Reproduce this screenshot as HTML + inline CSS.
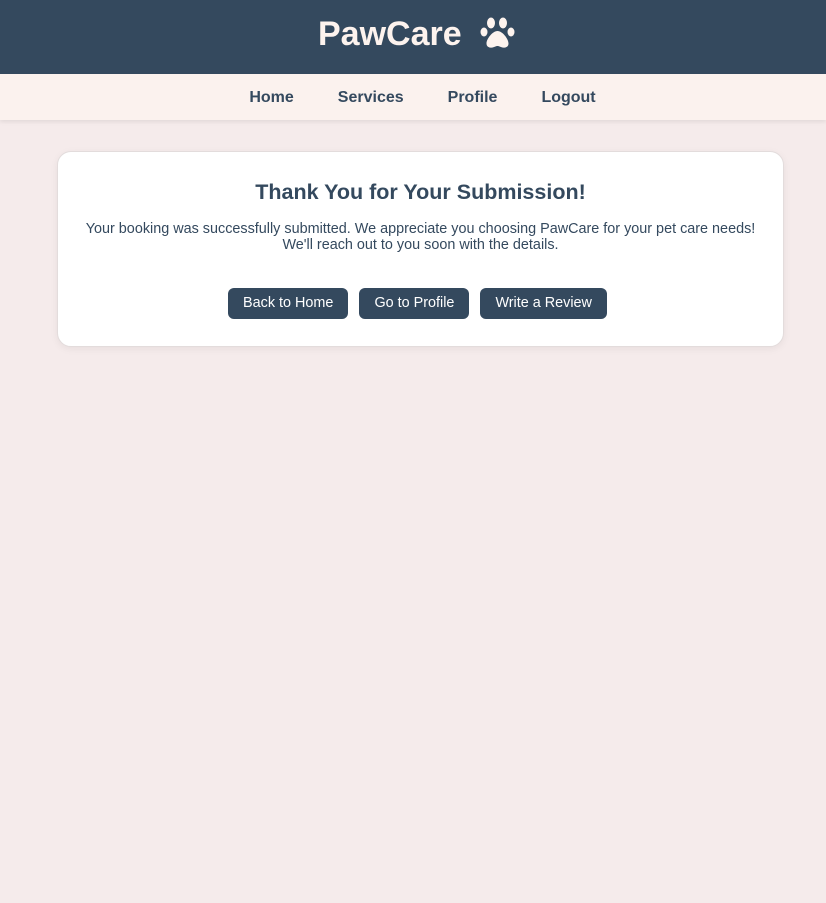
<!DOCTYPE html>
<html><head><meta charset="utf-8"><style>
*{margin:0;padding:0;box-sizing:border-box}
body{width:826px;height:903px;background:#f5ebeb;font-family:"Liberation Sans",Arial,sans-serif;overflow:hidden}
header{height:74px;background:#34495e;position:relative}
header h1{position:absolute;left:318px;top:15px;color:#fdf3ee;font-family:"Liberation Sans",sans-serif;font-size:34px;font-weight:bold;font-style:normal}
header svg{position:absolute;left:480px;top:15px}
nav{height:46px;background:#fbf2ee;display:flex;justify-content:center;align-items:center;box-shadow:0 2px 4px rgba(0,0,0,.08);padding-left:19px;padding-top:1px}
nav a{color:#34495e;font-weight:bold;font-size:16px;text-decoration:none;margin:0 22px}
.card{position:absolute;left:57px;top:151px;width:727px;height:196px;background:#fff;border:1px solid #e3dcdc;border-radius:14px;box-shadow:0 2px 8px rgba(0,0,0,.06);text-align:center}
h2{color:#34495e;font-size:21.5px;margin-top:28px}
p{color:#34495e;font-size:14.4px;line-height:16px;margin-top:16px}
.btns{margin-top:35px;display:flex;justify-content:center;gap:11px;margin-right:6px}
.btns span{background:#34495e;color:#fff;font-size:14.4px;height:31px;line-height:31px;padding:0 15px;border-radius:6px}
</style></head><body>
<header><h1>PawCare</h1>
<svg width="36" height="36" viewBox="0 0 36 34"><g fill="#fdf3ee"><ellipse cx="11" cy="7" rx="4" ry="5.5"/><ellipse cx="23" cy="7" rx="4" ry="5.5"/><ellipse cx="4" cy="16" rx="3.5" ry="4.5"/><ellipse cx="31" cy="16" rx="3.5" ry="4.5"/><path d="M17.5 15c-5 0-11 8-11 12.5 0 4 4 4.5 6 4 2.5-.6 3.5-1.5 5-1.5s2.5.9 5 1.5c2 .5 6 0 6-4C28.5 23 22.5 15 17.5 15z"/></g></svg>
</header>
<nav><a>Home</a><a>Services</a><a>Profile</a><a>Logout</a></nav>
<div class="card">
<h2>Thank You for Your Submission!</h2>
<p>Your booking was successfully submitted. We appreciate you choosing PawCare for your pet care needs!<br>We'll reach out to you soon with the details.</p>
<div class="btns"><span>Back to Home</span><span>Go to Profile</span><span>Write a Review</span></div>
</div>
</body></html>
